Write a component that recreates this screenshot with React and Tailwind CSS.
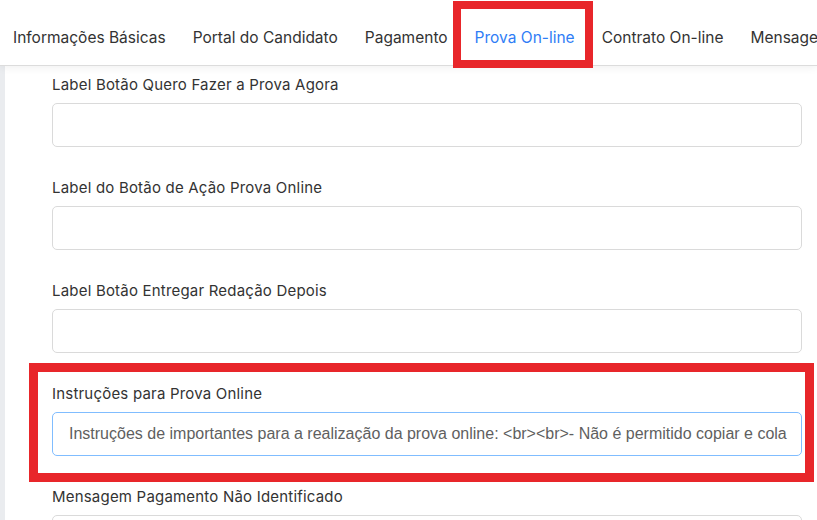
const TABS = [
  "Informações Básicas",
  "Portal do Candidato",
  "Pagamento",
  "Prova On-line",
  "Contrato On-line",
  "Mensagens",
];

const FIELDS = [
  { label: "Label Botão Quero Fazer a Prova Agora", value: "" },
  { label: "Label do Botão de Ação Prova Online", value: "" },
  { label: "Label Botão Entregar Redação Depois", value: "" },
  {
    label: "Instruções para Prova Online",
    value:
      "Instruções de importantes para a realização da prova online: <br><br>- Não é permitido copiar e cola",
    focused: true,
  },
  { label: "Mensagem Pagamento Não Identificado", value: "" },
];

export default function App() {
  return (
    <div className="relative w-[817px] h-[520px] overflow-hidden bg-[#eaecef] font-['Inter',sans-serif]">
      {/* Tabs */}
      <nav className="relative z-10 h-[66px] bg-white border-b border-[#dcdcdc] shadow-[0_2px_8px_rgba(0,0,0,0.06)] flex items-center pt-[10px] pl-[13px] gap-[27px] whitespace-nowrap overflow-hidden">
        {TABS.map((t) => (
          <span
            key={t}
            className={`text-[15.5px] ${t === "Prova On-line" ? "text-[#2f7df6]" : "text-[#333]"}`}
          >
            {t}
          </span>
        ))}
      </nav>

      {/* Form */}
      <div className="flex h-full">
        <div className="w-[5px] shrink-0" />
        <div className="flex-1 min-w-0 bg-white pl-[47px] pr-[15px] pt-[9px]">
          {FIELDS.map((f) => (
            <div key={f.label} className="mb-[31px]">
              <label className="block h-[20px] leading-[20px] text-[15px] tracking-[0.2px] text-[#333] mb-[8px]">
                {f.label}
              </label>
              <div
                className={`h-[44px] rounded-[5px] border bg-white px-[16px] flex items-center overflow-hidden whitespace-nowrap font-['Liberation_Sans',sans-serif] text-[16px] text-[#5f5f5f] ${
                  f.focused ? "border-[#80bdff]" : "border-[#dadada]"
                }`}
              >
                {f.value}
              </div>
            </div>
          ))}
        </div>
      </div>

      {/* Highlight boxes */}
      <div className="absolute left-[453px] top-[1px] w-[140px] h-[67px] border-[8px] border-[#e8262a] z-20 pointer-events-none" />
      <div className="absolute left-[29px] top-[363px] w-[785px] h-[119px] border-[9px] border-[#e8262a] z-20 pointer-events-none" />
    </div>
  );
}
